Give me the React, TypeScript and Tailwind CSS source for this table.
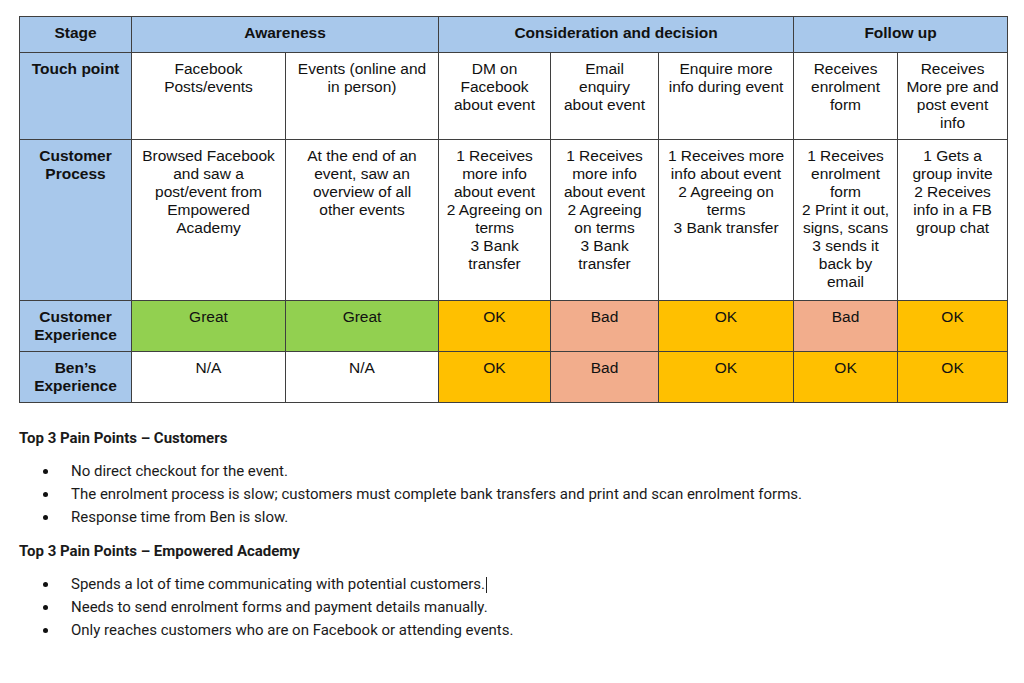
import React from "react";

const cols = [112, 154, 153, 112, 108, 135, 104, 110];

const touch: string[][] = [
  ["Facebook", "Posts/events"],
  ["Events (online and", "in person)"],
  ["DM on", "Facebook", "about event"],
  ["Email", "enquiry", "about event"],
  ["Enquire more", "info during event"],
  ["Receives", "enrolment", "form"],
  ["Receives", "More pre and", "post event", "info"],
];

const process: string[][] = [
  ["Browsed Facebook", "and saw a", "post/event from", "Empowered", "Academy"],
  ["At the end of an", "event, saw an", "overview of all", "other events"],
  ["1 Receives", "more info", "about event", "2 Agreeing on", "terms", "3 Bank", "transfer"],
  ["1 Receives", "more info", "about event", "2 Agreeing", "on terms", "3 Bank", "transfer"],
  ["1 Receives more", "info about event", "2 Agreeing on", "terms", "3 Bank transfer"],
  ["1 Receives", "enrolment", "form", "2 Print it out,", "signs, scans", "3 sends it", "back by", "email"],
  ["1 Gets a", "group invite", "2 Receives", "info in a FB", "group chat"],
];

const GREEN = "bg-[#92d050]";
const ORANGE = "bg-[#ffc000]";
const SALMON = "bg-[#f2ad8c]";
const WHITE = "bg-white";

const custExp: [string, string][] = [
  ["Great", GREEN],
  ["Great", GREEN],
  ["OK", ORANGE],
  ["Bad", SALMON],
  ["OK", ORANGE],
  ["Bad", SALMON],
  ["OK", ORANGE],
];

const benExp: [string, string][] = [
  ["N/A", WHITE],
  ["N/A", WHITE],
  ["OK", ORANGE],
  ["Bad", SALMON],
  ["OK", ORANGE],
  ["OK", ORANGE],
  ["OK", ORANGE],
];

const cell = "border border-[#3f3f3f] align-top text-center pt-[7px] px-1";
const label = "border border-[#3f3f3f] align-top text-center pt-[7px] px-1 bg-[#a8c8eb] font-bold";

function Lines({ lines }: { lines: string[] }) {
  return (
    <>
      {lines.map((l, i) => (
        <div key={i} className="whitespace-nowrap">
          {l}
        </div>
      ))}
    </>
  );
}

function Bullet({ children }: { children: React.ReactNode }) {
  return (
    <li className="flex items-center h-[23px]">
      <span className="w-[52px] flex justify-center">
        <span className="block w-[5px] h-[5px] rounded-full bg-[#111]" />
      </span>
      <span>{children}</span>
    </li>
  );
}

export default function App() {
  return (
    <div className="w-[1024px] h-[683px] bg-white overflow-hidden pl-[19px] pt-[16px] text-[#111]">
      <table
        className="table-fixed border-collapse text-[15.5px] leading-[18px]"
        style={{ fontFamily: '"Liberation Sans", Arial, sans-serif', width: 988 }}
      >
        <colgroup>
          {cols.map((w, i) => (
            <col key={i} style={{ width: w }} />
          ))}
        </colgroup>
        <tbody>
          <tr className="h-[36px] bg-[#a8c8eb] font-bold">
            <td className="border border-[#3f3f3f] text-center align-middle pb-[3px]">Stage</td>
            <td colSpan={2} className="border border-[#3f3f3f] text-center align-middle pb-[3px]">
              Awareness
            </td>
            <td colSpan={3} className="border border-[#3f3f3f] text-center align-middle pb-[3px]">
              Consideration and decision
            </td>
            <td colSpan={2} className="border border-[#3f3f3f] text-center align-middle pb-[3px]">
              Follow up
            </td>
          </tr>
          <tr className="h-[87px]">
            <td className={label}>Touch point</td>
            {touch.map((t, i) => (
              <td key={i} className={cell}>
                <Lines lines={t} />
              </td>
            ))}
          </tr>
          <tr className="h-[161px]">
            <td className={label}>
              <Lines lines={["Customer", "Process"]} />
            </td>
            {process.map((t, i) => (
              <td key={i} className={cell}>
                <Lines lines={t} />
              </td>
            ))}
          </tr>
          <tr className="h-[51px]">
            <td className={label}>
              <Lines lines={["Customer", "Experience"]} />
            </td>
            {custExp.map(([t, c], i) => (
              <td key={i} className={`${cell} ${c}`}>
                {t}
              </td>
            ))}
          </tr>
          <tr className="h-[51px]">
            <td className={label}>
              <Lines lines={["Ben\u2019s", "Experience"]} />
            </td>
            {benExp.map(([t, c], i) => (
              <td key={i} className={`${cell} ${c}`}>
                {t}
              </td>
            ))}
          </tr>
        </tbody>
      </table>

      <div
        className="text-[15px] text-[#1a1a1a]"
        style={{ fontFamily: 'Roboto, "Noto Sans", sans-serif' }}
      >
        <div className="mt-[25px] h-[20px] leading-[20px] font-bold">
          Top 3 Pain Points – Customers
        </div>
        <ul className="mt-[12px]">
          <Bullet>No direct checkout for the event.</Bullet>
          <Bullet>
            The enrolment process is slow; customers must complete bank transfers and print and scan
            enrolment forms.
          </Bullet>
          <Bullet>Response time from Ben is slow.</Bullet>
        </ul>
        <div className="mt-[12px] h-[20px] leading-[20px] font-bold">
          Top 3 Pain Points – Empowered Academy
        </div>
        <ul className="mt-[12px]">
          <Bullet>
            Spends a lot of time communicating with potential customers.
            <span className="inline-block w-px h-[16px] bg-[#222] align-middle ml-[1px]" />
          </Bullet>
          <Bullet>Needs to send enrolment forms and payment details manually.</Bullet>
          <Bullet>Only reaches customers who are on Facebook or attending events.</Bullet>
        </ul>
      </div>
    </div>
  );
}
